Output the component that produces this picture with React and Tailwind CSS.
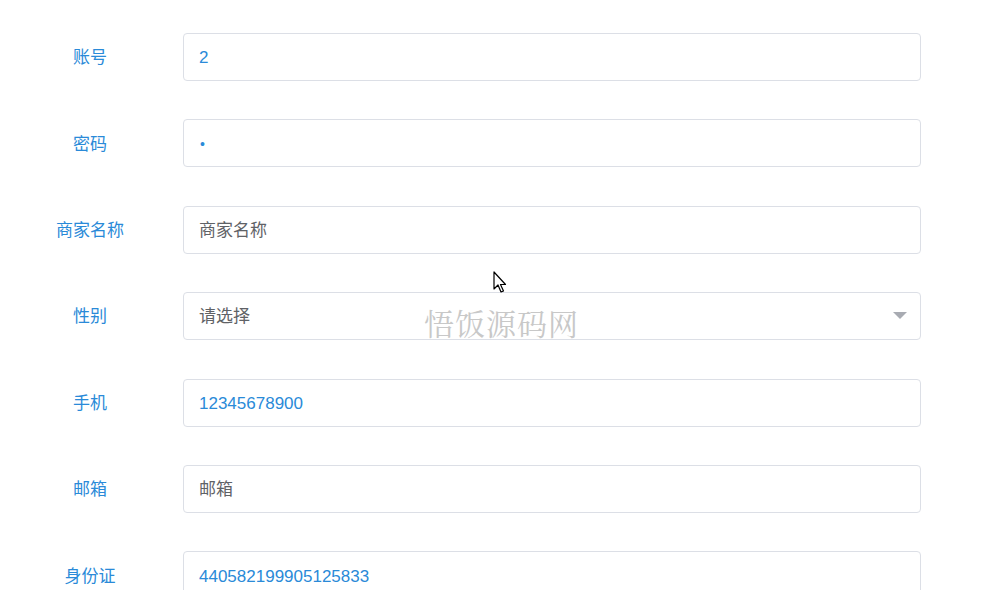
import React from "react";

const fields = [
  { label: "账号", value: "2" },
  { label: "密码", value: "•", password: true },
  { label: "商家名称", placeholder: "商家名称" },
  { label: "性别", placeholder: "请选择", select: true },
  { label: "手机", value: "12345678900" },
  { label: "邮箱", placeholder: "邮箱" },
  { label: "身份证", value: "440582199905125833" },
];

const font = { fontFamily: '"Liberation Sans", "Noto Sans CJK SC", sans-serif' };

export default function App() {
  return (
    <div className="relative w-[1001px] h-[590px] overflow-hidden bg-white" style={font}>
      <div className="flex flex-col gap-[38.4px] pt-[33px]">
        {fields.map((f) => (
          <div key={f.label} className="flex items-center">
            <div className="w-[180px] mt-[2px] text-center text-[17px] text-[#2a8ad8]">{f.label}</div>
            <div className="ml-[3px] w-[738px] h-[48px] flex items-center justify-between px-[15px] border border-[#dcdfe6] rounded-[4px] text-[17px]">
              {f.value ? (
                <span className={f.password ? "mt-[2px] text-[#2a8ad8] text-[14px] pl-[1px]" : "mt-[2px] text-[#2a8ad8]"}>
                  {f.value}
                </span>
              ) : (
                <span className="mt-[2px] text-[#5f6266]">{f.placeholder}</span>
              )}
              {f.select && (
                <svg width="14" height="8" viewBox="0 0 14 8" className="mr-[-2px]">
                  <path d="M0 0 L14 0 L7 7 Z" fill="#a8abb2" />
                </svg>
              )}
            </div>
          </div>
        ))}
      </div>

      {/* watermark */}
      <div
        className="absolute left-[424px] top-[300px] text-[30px] tracking-[1px] text-[#c8c8c8] pointer-events-none"
        style={{ fontFamily: '"Noto Serif CJK SC", "Liberation Serif", serif' }}
      >
        悟饭源码网
      </div>

      {/* mouse cursor */}
      <svg className="absolute left-[493px] top-[271px]" width="14" height="24" viewBox="0 0 14 24">
        <path
          d="M1 1 L1 18 L5 14 L8 21 L10.5 20 L7.5 13.5 L12.5 13.5 Z"
          fill="white"
          stroke="black"
          strokeWidth="1.2"
          strokeLinejoin="round"
        />
      </svg>
    </div>
  );
}
